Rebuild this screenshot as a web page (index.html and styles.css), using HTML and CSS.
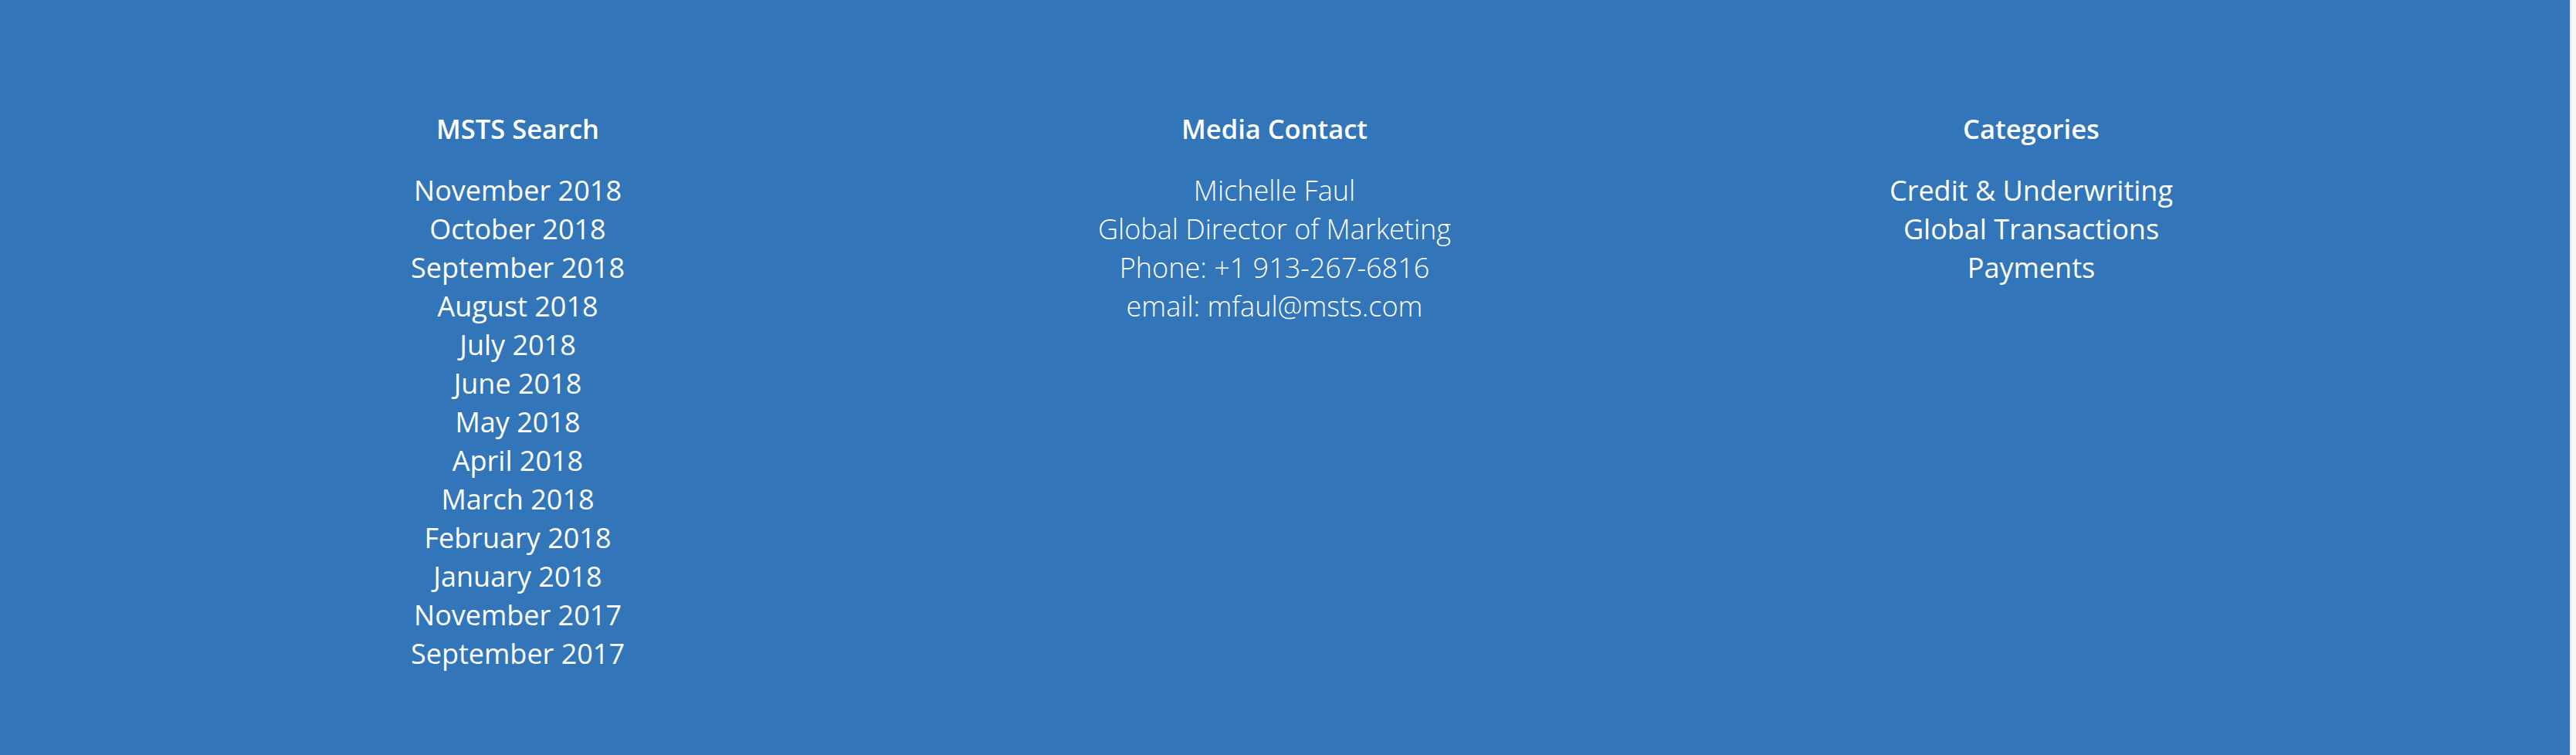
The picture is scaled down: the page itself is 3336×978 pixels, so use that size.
FILE: index.html
```html
<!DOCTYPE html>
<html lang="en">
<head>
<meta charset="utf-8">
<title>Footer</title>
<link rel="stylesheet" href="styles.css">
</head>
<body>
<footer class="footer">
  <div class="footer-inner">
    <section class="col">
      <h3 class="col-title">MSTS Search</h3>
      <ul class="links">
        <li>November 2018</li>
        <li>October 2018</li>
        <li>September 2018</li>
        <li>August 2018</li>
        <li>July 2018</li>
        <li>June 2018</li>
        <li>May 2018</li>
        <li>April 2018</li>
        <li>March 2018</li>
        <li>February 2018</li>
        <li>January 2018</li>
        <li>November 2017</li>
        <li>September 2017</li>
      </ul>
    </section>
    <section class="col">
      <h3 class="col-title">Media Contact</h3>
      <div class="contact">
        <p>Michelle Faul</p>
        <p>Global Director of Marketing</p>
        <p>Phone: +1 913-267-6816</p>
        <p>email: mfaul@msts.com</p>
      </div>
    </section>
    <section class="col">
      <h3 class="col-title">Categories</h3>
      <ul class="links">
        <li>Credit &amp; Underwriting</li>
        <li>Global Transactions</li>
        <li>Payments</li>
      </ul>
    </section>
  </div>
</footer>
</body>
</html>
```
FILE: styles.css
```css
html, body {
  margin: 0;
  padding: 0;
  height: 100%;
}
body {
  background: #f7f7f7;
  font-family: "Open Sans", "Noto Sans", sans-serif;
  display: flex;
}
.footer {
  flex: 0 0 auto;
  width: calc(100% - 6px);
  height: 978px;
  background: #3276b9;
  color: #fff;
  border-right: 2px solid #e4e4e4;
  box-sizing: border-box;
}
.footer-inner {
  display: grid;
  grid-template-columns: repeat(3, 980px);
  justify-content: center;
  padding-top: 142px;
  margin-left: -27px;
}
.col {
  text-align: center;
}
.col-title {
  margin: 0 0 30px;
  font-size: 34.5px;
  font-weight: 600;
  line-height: 50px;
}
.links {
  list-style: none;
  margin: 0;
  padding: 0;
  font-size: 36px;
  line-height: 50px;
}
.contact {
  font-size: 36px;
  line-height: 50px;
  font-weight: 300;
}
.contact p {
  margin: 0;
}
```
